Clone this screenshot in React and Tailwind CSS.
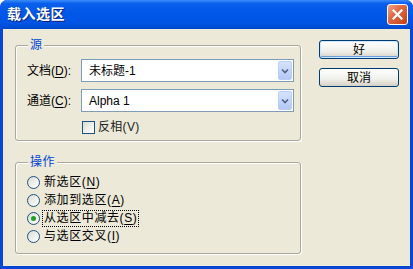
import React from "react";

// Kleine Helfer für die XP-Optik
const U = ({ children }) => <span className="underline underline-offset-2">{children}</span>;

const ComboArrow = () => (
  <div className="w-[14px] h-full rounded-[2px] bg-[linear-gradient(180deg,#d6e3fd,#b4c8f6)] border border-[#b9cdf5] flex items-center justify-center">
    <svg width="8" height="6" viewBox="0 0 8 6">
      <polyline points="1,1.5 4,4.5 7,1.5" fill="none" stroke="#4d6185" strokeWidth="1.6" />
    </svg>
  </div>
);

const Combo = ({ value }) => (
  <div className="w-[213px] h-[23px] border border-[#7f9db9] bg-white flex items-stretch p-[1px]">
    <div className="flex-1 pl-[6px] flex items-center text-[12px] text-black">{value}</div>
    <ComboArrow />
  </div>
);

const Radio = ({ checked }) => (
  <div className="w-[13px] h-[13px] rounded-full border border-[#1c5180] bg-[linear-gradient(135deg,#dcdcd5,#ffffff)] flex items-center justify-center shrink-0">
    {checked && <div className="w-[5px] h-[5px] rounded-full bg-[#21a121]" />}
  </div>
);

const XpButton = ({ children, primary }) => (
  <button
    className={
      "w-[80px] h-[19px] rounded-[3px] border border-[#003c74] text-[12px] leading-none text-black bg-[linear-gradient(180deg,#ffffff,#f0f0ea_60%,#d6d0c5)] " +
      (primary ? "shadow-[inset_0_0_0_1px_#cee7ff,inset_0_-1px_0_1px_#699ce3]" : "")
    }
  >
    {children}
  </button>
);

export default function App() {
  const ops = [
    { t: "新选区", k: "N" },
    { t: "添加到选区", k: "A" },
    { t: "从选区中减去", k: "S", checked: true },
    { t: "与选区交叉", k: "I" },
  ];

  return (
    <div className="w-[413px] h-[269px] bg-[#0a46d4] rounded-t-[7px] flex flex-col font-['Liberation_Sans','Noto_Sans_CJK_SC',sans-serif] text-[12px] text-black overflow-hidden">
      {/* Titelleiste */}
      <div className="h-[29px] shrink-0 rounded-t-[7px] bg-[linear-gradient(180deg,#3b8cfb_0%,#0a60ec_12%,#0058e8_45%,#0054e3_80%,#0048cc_100%)] flex items-center justify-between pl-[7px] pr-[5px]">
        <div className="text-white font-bold text-[14px] tracking-[0.5px] [text-shadow:1px_1px_0_#0a1e6e]">载入选区</div>
        <div className="w-[21px] h-[21px] rounded-[3px] border border-white bg-[linear-gradient(135deg,#f0a58a,#e06a45_40%,#c2401c)] flex items-center justify-center">
          <svg width="11" height="11" viewBox="0 0 11 11">
            <path d="M1.5 1.5 L9.5 9.5 M9.5 1.5 L1.5 9.5" stroke="#fff" strokeWidth="2.2" strokeLinecap="square" />
          </svg>
        </div>
      </div>

      {/* Inhalt */}
      <div className="flex-1 mx-[3px] mb-[3px] bg-[#ece9d8] flex">
        <div className="pl-[12px] pt-[16px] flex flex-col">
          {/* Quelle */}
          <div className="relative w-[286px] h-[96px] rounded-[3px] border border-[#aca899] shadow-[1px_1px_0_#fff,inset_1px_1px_0_#fff] pl-[11px] pt-[13px]">
            <div className="absolute -top-[8px] left-[12px] px-[2px] bg-[#ece9d8] text-[#0046d5] leading-[14px]">源</div>
            <div className="flex items-center">
              <div className="w-[54px]">文档(<U>D</U>):</div>
              <Combo value="未标题-1" />
            </div>
            <div className="flex items-center mt-[7px]">
              <div className="w-[54px]">通道(<U>C</U>):</div>
              <Combo value="Alpha 1" />
            </div>
            <div className="flex items-center mt-[9px] ml-[55px] gap-[3px]">
              <div className="w-[13px] h-[13px] border border-[#1c5180] bg-[linear-gradient(135deg,#dcdcd5,#ffffff)]" />
              <div className="text-[#222] leading-[13px] tracking-[0.3px]">反相(V)</div>
            </div>
          </div>

          {/* Operation */}
          <div className="relative mt-[21px] w-[286px] h-[92px] rounded-[3px] border border-[#aca899] shadow-[1px_1px_0_#fff,inset_1px_1px_0_#fff] pl-[11px] pt-[10px]">
            <div className="absolute -top-[8px] left-[12px] px-[2px] bg-[#ece9d8] text-[#0046d5] leading-[14px] tracking-[0.5px]">操作</div>
            {ops.map((o) => (
              <div key={o.k} className="h-[18px] flex items-center gap-[2px]">
                <Radio checked={o.checked} />
                <div className={"leading-[15px] px-[1px] tracking-[0.6px] " + (o.checked ? "border border-dotted border-black" : "border border-transparent")}>
                  {o.t}(<U>{o.k}</U>)
                </div>
              </div>
            ))}
          </div>
        </div>

        {/* Knöpfe */}
        <div className="pl-[18px] pt-[11px] flex flex-col gap-[9px]">
          <XpButton primary>好</XpButton>
          <XpButton>取消</XpButton>
        </div>
      </div>
    </div>
  );
}
